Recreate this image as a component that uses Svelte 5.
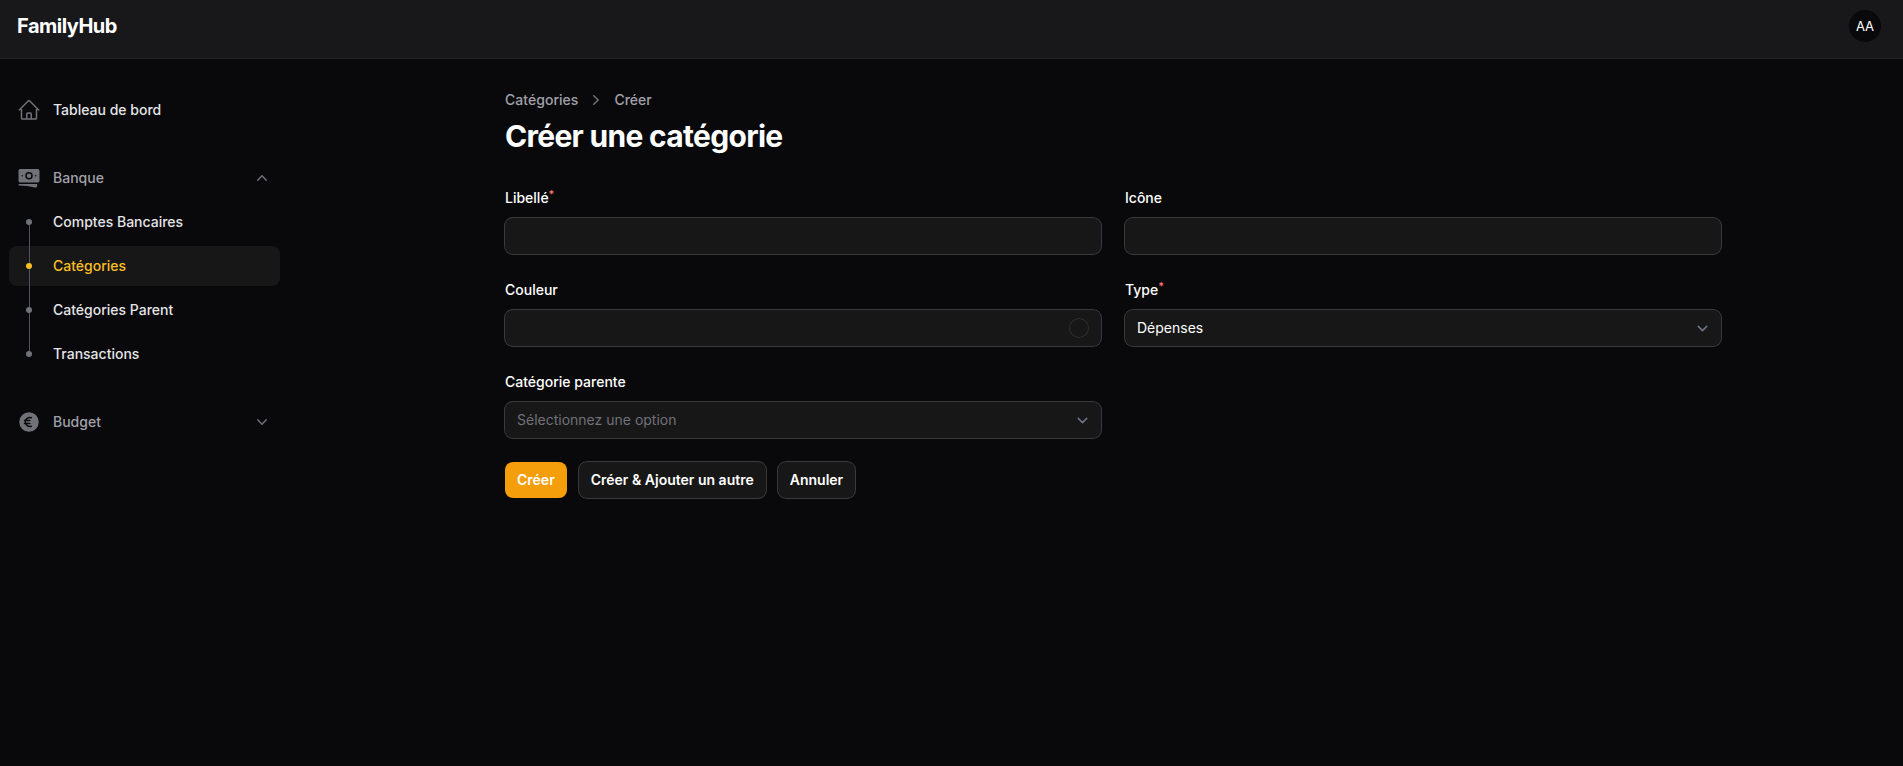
<script>
  const groups = [
    {
      label: 'Banque',
      icon: 'banknotes',
      open: true,
      items: [
        { label: 'Comptes Bancaires' },
        { label: 'Catégories', active: true },
        { label: 'Catégories Parent' },
        { label: 'Transactions' }
      ]
    },
    { label: 'Budget', icon: 'euro', open: false, items: [] }
  ];

  const fields = [
    { label: 'Libellé', required: true, kind: 'text' },
    { label: 'Icône', kind: 'text' },
    { label: 'Couleur', kind: 'color' },
    { label: 'Type', required: true, kind: 'select', value: 'Dépenses' },
    { label: 'Catégorie parente', kind: 'select', placeholder: 'Sélectionnez une option' }
  ];
</script>

<header class="topbar">
  <div class="brand">FamilyHub</div>
  <div class="avatar">AA</div>
</header>

<div class="layout">
  <nav class="sidebar">
    <a class="nav-item" href="#top">
      <svg class="icon" viewBox="0 0 24 24" fill="none" stroke="currentColor" stroke-width="1.5" stroke-linecap="round" stroke-linejoin="round">
        <path d="m2.25 12 8.954-8.955c.44-.439 1.152-.439 1.591 0L21.75 12M4.5 9.75v10.125c0 .621.504 1.125 1.125 1.125H9.75v-4.875c0-.621.504-1.125 1.125-1.125h2.25c.621 0 1.125.504 1.125 1.125V21h4.125c.621 0 1.125-.504 1.125-1.125V9.75M8.25 21h8.25" />
      </svg>
      <span>Tableau de bord</span>
    </a>

    {#each groups as group}
      <div class="group">
        <div class="nav-item heading">
          {#if group.icon === 'banknotes'}
            <svg class="icon" viewBox="0 0 24 24" fill="currentColor">
              <path d="M12 7.5a2.25 2.25 0 1 0 0 4.5 2.25 2.25 0 0 0 0-4.5Z" />
              <path fill-rule="evenodd" d="M1.5 4.875C1.5 3.839 2.34 3 3.375 3h17.25c1.035 0 1.875.84 1.875 1.875v9.75c0 1.036-.84 1.875-1.875 1.875H3.375A1.875 1.875 0 0 1 1.5 14.625v-9.75ZM8.25 9.75a3.75 3.75 0 1 1 7.5 0 3.75 3.75 0 0 1-7.5 0ZM18.75 9a.75.75 0 0 0-.75.75v.008c0 .414.336.75.75.75h.008a.75.75 0 0 0 .75-.75V9.75a.75.75 0 0 0-.75-.75h-.008ZM4.5 9.75A.75.75 0 0 1 5.25 9h.008a.75.75 0 0 1 .75.75v.008a.75.75 0 0 1-.75.75H5.25a.75.75 0 0 1-.75-.75V9.75Z" />
              <path d="M2.25 18a.75.75 0 0 0 0 1.5c5.4 0 10.63.722 15.6 2.075 1.19.324 2.4-.558 2.4-1.82V18.75a.75.75 0 0 0-.75-.75H2.25Z" />
            </svg>
          {:else}
            <svg class="icon" viewBox="0 0 24 24" fill="none">
              <circle cx="12" cy="12" r="9.75" fill="currentColor" />
              <path d="M14.25 7.756a4.5 4.5 0 1 0 0 8.488M7.5 10.5h5.25m-5.25 3h5.25" stroke="#09090b" stroke-width="1.5" stroke-linecap="round" />
            </svg>
          {/if}
          <span>{group.label}</span>
          <svg class="toggle" class:closed={!group.open} viewBox="0 0 20 20" fill="currentColor">
            <path d="M14.77 12.79a.75.75 0 0 1-1.06-.02L10 8.832 6.29 12.77a.75.75 0 1 1-1.08-1.04l4.25-4.5a.75.75 0 0 1 1.08 0l4.25 4.5a.75.75 0 0 1-.02 1.06z" />
          </svg>
        </div>
        {#each group.items as item}
          <a class="nav-item child" class:active={item.active} href="#top">
            <span class="marker"><i></i></span>
            <span>{item.label}</span>
          </a>
        {/each}
      </div>
    {/each}
  </nav>

  <main>
    <div class="crumbs">
      <span>Catégories</span>
      <svg viewBox="0 0 20 20" fill="currentColor">
        <path d="M7.21 14.77a.75.75 0 0 1 .02-1.06L11.168 10 7.23 6.29a.75.75 0 1 1 1.04-1.08l4.5 4.25a.75.75 0 0 1 0 1.08l-4.5 4.25a.75.75 0 0 1-1.06-.02z" />
      </svg>
      <span>Créer</span>
    </div>
    <h1>Créer une catégorie</h1>

    <div class="form">
      {#each fields as field}
        <div class="field">
          <div class="label">{field.label}{#if field.required}<sup>*</sup>{/if}</div>
          <div class="control {field.kind}">
            <span class:placeholder={!field.value}>{field.value ?? field.placeholder ?? ''}</span>
            {#if field.kind === 'color'}
              <i class="swatch"></i>
            {:else if field.kind === 'select'}
              <svg viewBox="0 0 20 20" fill="none" stroke="#6b7280" stroke-width="1.5" stroke-linecap="round" stroke-linejoin="round">
                <path d="m6 8 4 4 4-4" />
              </svg>
            {/if}
          </div>
        </div>
      {/each}
    </div>

    <div class="actions">
      <button class="primary">Créer</button>
      <button>Créer &amp; Ajouter un autre</button>
      <button>Annuler</button>
    </div>
  </main>
</div>

<style>
  :global(body) {
    background: #09090b;
    color: #fff;
    font-family: Inter, sans-serif;
    font-size: 14px;
    line-height: 20px;
  }
  :global(#app) {
    min-height: 766px;
  }
  .topbar {
    box-sizing: border-box;
    display: flex;
    align-items: flex-start;
    justify-content: space-between;
    height: 59px;
    padding: 10px 22px 0 17px;
    background: #18181b;
    border-bottom: 1px solid #222225;
  }
  .brand {
    font-size: 20px;
    font-weight: 700;
    line-height: 20px;
    letter-spacing: -0.5px;
    padding-top: 6px;
  }
  .avatar {
    width: 32px;
    height: 32px;
    border-radius: 50%;
    background: #09090b;
    text-align: center;
    line-height: 32px;
    font-size: 13px;
  }
  .layout {
    display: flex;
  }
  .sidebar {
    display: flex;
    flex-direction: column;
    gap: 28px;
    width: 271px;
    padding: 31px 0 0 9px;
  }
  .group {
    display: flex;
    flex-direction: column;
    gap: 4px;
  }
  .nav-item {
    display: flex;
    align-items: center;
    gap: 12px;
    height: 40px;
    padding: 0 8px;
    box-sizing: border-box;
    border-radius: 8px;
    color: #e4e4e7;
    font-weight: 550;
    text-decoration: none;
  }
  .icon {
    width: 24px;
    height: 24px;
    color: #71717a;
  }
  .heading {
    color: #a1a1aa;
    font-weight: 500;
  }
  .toggle {
    width: 20px;
    height: 20px;
    margin-left: auto;
    color: #71717a;
  }
  .closed {
    transform: rotate(180deg);
  }
  .marker {
    position: relative;
    display: flex;
    align-items: center;
    justify-content: center;
    width: 24px;
    height: 40px;
  }
  .marker i {
    position: relative;
    width: 6px;
    height: 6px;
    border-radius: 50%;
    background: #71717a;
  }
  .marker::before {
    content: '';
    position: absolute;
    left: 12px;
    top: -4px;
    bottom: 0;
    width: 1px;
    background: #52525b;
  }
  .heading + .child .marker::before {
    top: 20px;
  }
  .child:last-child .marker::before {
    bottom: 20px;
  }
  .active {
    background: #171717;
    color: #fbbf24;
  }
  .active .marker i {
    background: #fbbf24;
  }
  main {
    width: 1216px;
    margin-left: 225px;
    padding-top: 31px;
  }
  .crumbs {
    display: flex;
    gap: 8px;
    color: #a1a1aa;
    font-weight: 500;
    letter-spacing: 0.03px;
  }
  .crumbs svg {
    width: 20px;
    height: 20px;
    color: #71717a;
  }
  h1 {
    margin: 8px 0 32px;
    font-size: 30px;
    line-height: 36px;
    font-weight: 700;
    letter-spacing: -0.7px;
  }
  .form {
    display: grid;
    grid-template-columns: 1fr 1fr;
    gap: 24px;
  }
  .field {
    display: grid;
    gap: 8px;
  }
  .label {
    height: 24px;
    line-height: 24px;
    font-weight: 550;
  }
  sup {
    position: relative;
    top: -0.5em;
    font-size: 10.5px;
    font-weight: 700;
    line-height: 0;
    vertical-align: baseline;
    color: #f87171;
  }
  .control {
    display: flex;
    align-items: center;
    justify-content: space-between;
    height: 36px;
    padding: 0 8px 0 12px;
    box-sizing: border-box;
    border-radius: 8px;
    background: #171717;
    box-shadow: 0 0 0 1px #3a3a3c;
  }
  .control svg {
    width: 21px;
    height: 21px;
  }
  .placeholder {
    color: #71717a;
  }
  .color {
    padding-right: 12px;
  }
  .swatch {
    width: 20px;
    height: 20px;
    border-radius: 50%;
    box-shadow: inset 0 0 0 1px rgba(255, 255, 255, 0.1);
  }
  .actions {
    display: flex;
    gap: 12px;
    margin-top: 24px;
  }
  button {
    height: 36px;
    padding: 0 12px;
    border: 0;
    border-radius: 8px;
    background: #171717;
    box-shadow: 0 0 0 1px #3a3a3c;
    color: #fff;
    font: 600 14px/20px Inter, sans-serif;
    letter-spacing: 0.005px;
  }
  .primary {
    background: #f59e0b;
    box-shadow: none;
  }
</style>
